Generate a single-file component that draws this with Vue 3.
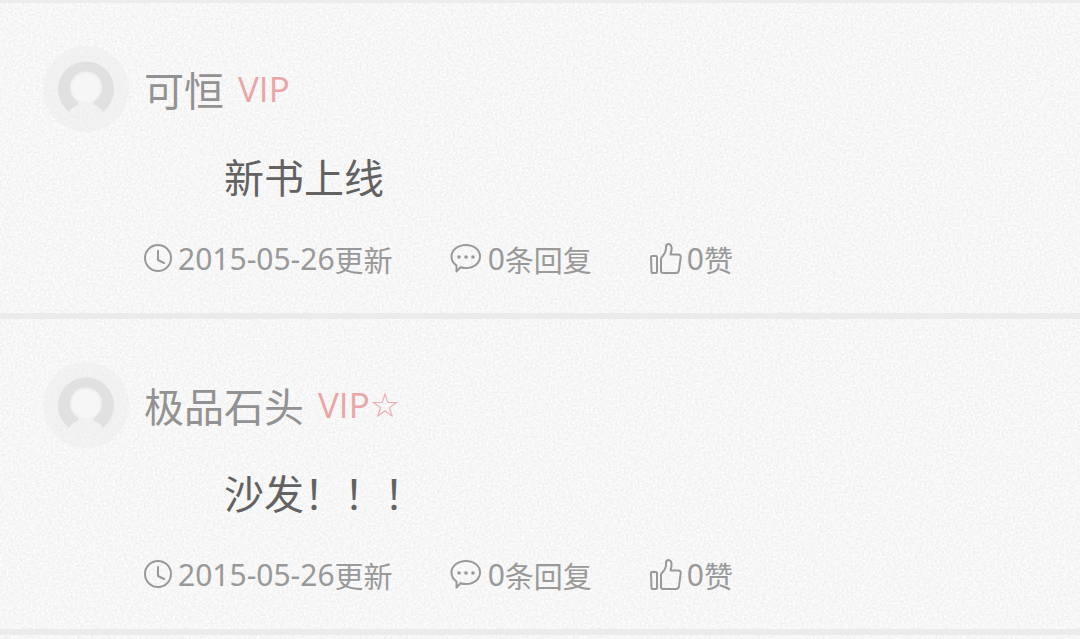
<script setup>
const comments = [
  { id: 1, name: '可恒', badge: 'VIP', star: '', text: '新书上线', date: '2015-05-26', replies: 0, likes: 0 },
  { id: 2, name: '极品石头', badge: 'VIP', star: '☆', text: '沙发！！！', date: '2015-05-26', replies: 0, likes: 0 },
]
</script>

<template>
  <main class="list">
    <svg class="paper" aria-hidden="true">
      <filter id="grain" x="0" y="0" width="100%" height="100%" color-interpolation-filters="sRGB">
        <feTurbulence type="fractalNoise" baseFrequency="0.45" numOctaves="2" seed="4" />
        <feColorMatrix type="matrix" values="0.1 0 0 0 0.917  0.1 0 0 0 0.917  0.1 0 0 0 0.917  0 0 0 0 1" />
      </filter>
      <rect width="100%" height="100%" filter="url(#grain)" />
    </svg>
    <article v-for="c in comments" :key="c.id" class="comment">
      <svg class="avatar" viewBox="0 0 88 88" aria-hidden="true">
        <circle cx="44" cy="44" r="43" fill="#ebebeb" opacity=".5" />
        <path d="M24 64A28 28 0 1 1 64 64L61 67C58 62 55 61 52 60C51 58 52 57 54 55A16 16 0 1 0 34 55C36 57 37 58 36 60C33 61 30 62 27 67Z" fill="#e1e1e1" />
        <circle cx="44" cy="43" r="14" fill="#f6f6f6" />
      </svg>
      <div class="body">
        <header class="head">
          <span class="name">{{ c.name }}</span>
          <span class="badge">{{ c.badge }}<span class="star">{{ c.star }}</span></span>
        </header>
        <p class="text">{{ c.text }}</p>
        <footer class="meta">
          <span class="item">
            <svg class="icon clock" viewBox="0 0 30 30" aria-hidden="true">
              <circle cx="14" cy="14" r="13" />
              <path d="M14 7V16L20 19" />
            </svg>
            <span class="num">{{ c.date }}</span>更新
          </span>
          <button type="button" class="item">
            <svg class="icon" viewBox="0 0 34 32" aria-hidden="true">
              <path d="M16 2C24 2 30 7 30 13.500S24 25 16 25C14 25 12 24.700 10.500 24.200L6.500 28.500V22.500C3.500 20.500 1.500 17.500 1.500 13.500C1.500 7 8 2 16 2Z" />
              <g class="dots"><circle cx="9" cy="14" r="1.800" /><circle cx="16" cy="14" r="1.800" /><circle cx="23" cy="14" r="1.800" /></g>
            </svg>
            <span class="num">{{ c.replies }}</span>条回复
          </button>
          <button type="button" class="item">
            <svg class="icon" viewBox="0 0 34 32" aria-hidden="true">
              <path d="M3 13H7Q8 13 8 14V29Q8 30 7 30H3.500Q2.500 30 2.500 29L2 14Q2 13 3 13Z" />
              <path d="M12.500 14.500C15 12 17 9.500 17 5.500V3.500Q17.500 1 19.500 1Q21.500 1 22.500 4Q23 7 21.500 11.500H29Q32 11.500 31.700 14.500L30 27Q29.500 30 27 30H14.500Q12 30 12 28V16Q12 15 12.500 14.500Z" />
            </svg>
            <span class="num">{{ c.likes }}</span>赞
          </button>
        </footer>
      </div>
    </article>
  </main>
</template>

<style>
body {
  margin: 0;
  background: #f6f6f6;
}
</style>

<style scoped>
.list {
  position: relative;
  min-height: 100vh;
  box-sizing: border-box;
  border-top: 3px solid #ececec;
  font-family: "Noto Sans", "Noto Sans CJK SC", sans-serif;
  color: #999;
}
.paper {
  position: absolute;
  inset: 0;
  width: 100%;
  height: 100%;
}
.comment {
  position: relative;
  display: flex;
  gap: 14px;
  padding: 42px 42px 26px;
  border-bottom: 6px solid #ebebeb;
}
.avatar {
  flex: none;
  width: 88px;
  height: 88px;
}
.body {
  flex: 1;
  min-width: 0;
}
.head {
  display: flex;
  align-items: center;
  gap: 14px;
  height: 88px;
}
.name {
  font-family: "Noto Sans CJK SC", sans-serif;
  font-size: 40px;
  line-height: 58px;
  color: #929292;
}
.badge {
  display: flex;
  align-items: center;
  font-family: "Open Sans", sans-serif;
  font-size: 35px;
  line-height: 60px;
  color: #eaa6a6;
}
.star {
  font-family: "DejaVu Sans", sans-serif;
  font-size: 34px;
}
.text {
  margin: 0;
  padding-left: 80px;
  font-family: "Noto Sans CJK SC", sans-serif;
  font-size: 40px;
  line-height: 86px;
  color: #626262;
}
.meta {
  display: flex;
  gap: 57px;
  height: 56px;
  margin-top: 12px;
}
.item {
  display: flex;
  align-items: center;
  padding: 0;
  border: 0;
  background: none;
  color: #999;
  font-family: "Noto Sans CJK SC", sans-serif;
  font-size: 29px;
  line-height: 56px;
  white-space: nowrap;
}
.num {
  font-family: "Noto Sans", sans-serif;
  font-size: 30px;
}
.icon {
  width: 34px;
  height: 32px;
  margin-right: 4px;
  fill: none;
  stroke: #999;
  stroke-width: 2;
  stroke-linejoin: round;
  stroke-linecap: round;
}
.clock {
  width: 30px;
  height: 30px;
}
.dots {
  fill: #999;
  stroke: none;
}
</style>
